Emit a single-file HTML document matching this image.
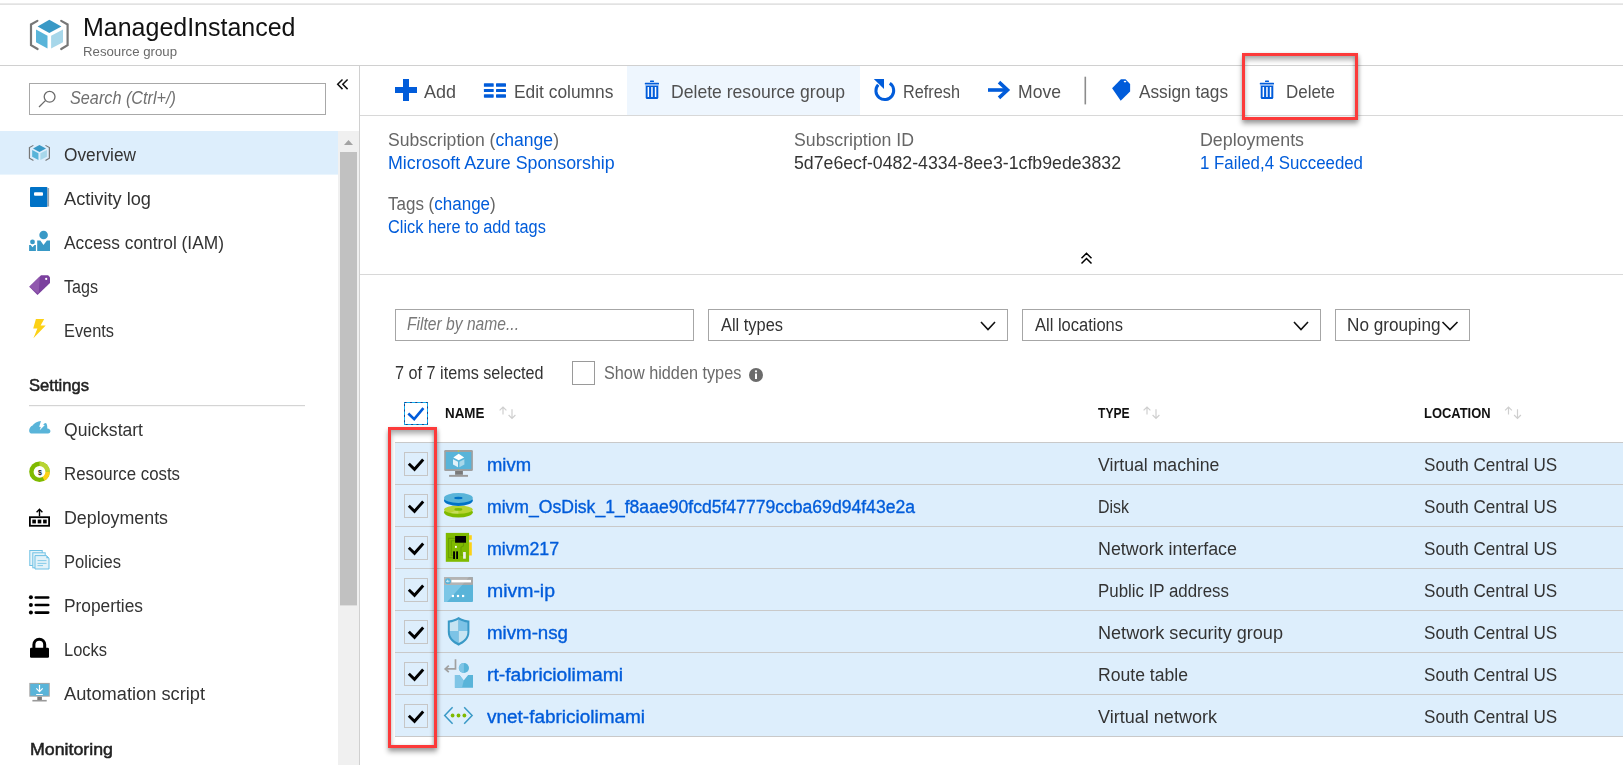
<!DOCTYPE html>
<html><head><meta charset="utf-8"><style>
html,body{margin:0;padding:0;width:1623px;height:765px;overflow:hidden;background:#fff;}
body{position:relative;font-family:"Liberation Sans",sans-serif;}
.t{position:absolute;white-space:pre;line-height:1;transform-origin:0 0;}
.rb{position:absolute;border:3px solid #fc3a3a;box-sizing:border-box;box-shadow:0 4px 5px rgba(0,0,0,.33), 1px 1px 4px rgba(0,0,0,.15), inset 0 4px 5px rgba(0,0,0,.3), inset -1px 0 3px rgba(0,0,0,.12);}
svg.bg{position:absolute;left:0;top:0;}
.tl{position:absolute;left:0;top:0;width:1623px;height:765px;will-change:transform;}
</style></head><body>
<svg class="bg" width="1623" height="765" viewBox="0 0 1623 765">
<defs>
 <g id="rg">
  <path d="M37.4,20.9 L31,24.5 L31,45.1 L37.6,49" fill="none" stroke="#777" stroke-width="2.2" stroke-linecap="round"/>
  <path d="M61.2,20.9 L67.6,24.5 L67.6,45.1 L61.2,49" fill="none" stroke="#777" stroke-width="2.2" stroke-linecap="round"/>
  <path d="M49.3,19.7 L61.4,26.5 L49.3,33 L37.6,26.5 Z" fill="#3999c6"/>
  <path d="M36,29.4 L47.5,35.8 L47.5,48.6 L36,42.2 Z" fill="#59b4d9"/>
  <path d="M51.1,35.8 L63,29.4 L63,42.2 L51.1,48.6 Z" fill="#a7d7ea"/>
 </g>
</defs>
<!-- lines -->
<rect x="0" y="3.5" width="1623" height="1.2" fill="#d6d6d6"/>
<rect x="0" y="65" width="1623" height="1" fill="#d0d0d0"/>
<rect x="359" y="65" width="1" height="700" fill="#d0d0d0"/>
<rect x="360" y="115" width="1263" height="1" fill="#d8d8d8"/>
<rect x="360" y="274" width="1263" height="1" fill="#d8d8d8"/>
<!-- header icon -->
<use href="#rg"/>
<!-- sidebar -->
<rect x="29.5" y="83.5" width="296" height="31" fill="#fff" stroke="#a8a8a8" stroke-width="1"/>
<circle cx="49.6" cy="96.8" r="5.4" fill="none" stroke="#6b6b6b" stroke-width="1.3"/>
<path d="M45.4,100.6 L39,107" stroke="#6b6b6b" stroke-width="1.3"/>
<path d="M342.5,79.5 L337.7,84.3 L342.5,89.1 M347.6,79.5 L342.8,84.3 L347.6,89.1" fill="none" stroke="#111" stroke-width="1.5"/>
<rect x="0" y="131" width="338" height="43.6" fill="#ddeefc"/>
<rect x="338" y="131" width="21" height="634" fill="#f0f0f0"/>
<path d="M344,145 L348.5,140 L353,145 Z" fill="#a3a3a3"/>
<rect x="340" y="152" width="17" height="453.4" fill="#c1c1c1"/>
<!-- overview icon -->
<g transform="translate(28.9,145) scale(0.545,0.52) translate(-30,-19.7)"><use href="#rg"/></g>
<!-- activity log -->
<rect x="30" y="187" width="17.5" height="20" rx="1" fill="#0072c6"/>
<rect x="47.5" y="188" width="1.6" height="18.5" fill="#9ea4aa"/>
<rect x="34" y="192.2" width="9" height="3.6" rx="1" fill="#fff"/>
<!-- IAM -->
<circle cx="43.6" cy="235" r="4.3" fill="#3999c6"/>
<path d="M37.2,240.6 L40.3,240.6 L43.5,245 L46.9,240.6 L50,240.6 L50,250.9 L37.2,250.9 Z" fill="#3999c6"/>
<circle cx="32.5" cy="241.9" r="2.4" fill="#3999c6"/>
<path d="M29.1,245 L30.7,245 L32.5,247.2 L34.5,245 L35.9,245 L35.9,250.9 L29.1,250.9 Z" fill="#3999c6"/>
<!-- tags purple -->
<path d="M29.3,286.7 L41,275.2 L48.1,275.2 L50,277.3 L50,283 L37.5,295 Z" fill="#7b409e"/>
<path d="M29.3,286.7 L39.8,276.4 L38.6,293.9 Z" fill="#9159ae"/>
<circle cx="46.2" cy="278.9" r="1.1" fill="#fff"/>
<!-- events -->
<path d="M35.9,318.9 L44.2,318.9 L40.6,325.6 L45.7,325.6 L33.4,338.2 L37.4,328.6 L33.2,328.6 Z" fill="#fcd116"/>
<rect x="29" y="405" width="276" height="1.2" fill="#d4d4d4"/>
<!-- quickstart cloud -->
<path d="M31,433.4 C28.4,433 28.3,427.2 32.6,425.5 C34,423.6 37.5,421.1 41,421 L39.2,426.7 L40.8,426.9 L39.7,430.3 L44.9,425.1 L43.3,425 C43.9,423.8 44.8,423.1 45.6,423.1 C47,423.4 47.4,426 47.3,428.6 C49.3,428.6 50.6,430 50.4,431.6 C50.2,432.9 49.3,433.4 48.2,433.4 Z" fill="#59b4d9"/>
<!-- resource costs -->
<circle cx="39.5" cy="471.8" r="10.3" fill="#7fba00"/>
<path d="M39.5,471.8 L39.5,461.5 A10.3,10.3 0 0 1 49.8,471.8 Z" fill="#b8d432"/>
<path d="M39.5,471.8 L49.8,471.8 A10.3,10.3 0 0 1 44.6,480.7 Z" fill="#fcd116"/>
<circle cx="39.5" cy="471.8" r="5.9" fill="#fff"/>
<text x="37.9" y="474.6" font-size="7" font-family="Liberation Sans" font-weight="bold" fill="#222">$</text>
<!-- deployments -->
<rect x="29.9" y="517.2" width="19.2" height="8.6" fill="none" stroke="#000" stroke-width="1.8"/>
<rect x="32.3" y="519.6" width="3.6" height="3.8" fill="#000"/><rect x="37.7" y="519.6" width="3.6" height="3.8" fill="#000"/><rect x="43.1" y="519.6" width="3.6" height="3.8" fill="#000"/>
<path d="M39.5,516.3 L39.5,509.5 M36.6,512.3 L39.5,509.3 L42.4,512.3" fill="none" stroke="#000" stroke-width="1.4"/>
<!-- policies -->
<rect x="29.8" y="550.5" width="12.4" height="15" fill="#e6f4fa" stroke="#6fc1e5" stroke-width="1"/>
<rect x="32.8" y="552.8" width="12.4" height="15" fill="#e6f4fa" stroke="#6fc1e5" stroke-width="1"/>
<path d="M35,555.6 H46.4 L49,558.2 V569 H35 Z" fill="#e2f2f9" stroke="#6fc1e5" stroke-width="1"/>
<path d="M46.4,555.6 L49,558.2 H46.4 Z" fill="#6fc1e5"/>
<path d="M37.5,560.6 H46.5 M37.5,563.4 H46.5 M37.5,565.6 H43" stroke="#7cc6e6" stroke-width="0.9"/>
<!-- properties -->
<circle cx="30.9" cy="597.3" r="2" fill="#000"/><circle cx="30.9" cy="604.9" r="2" fill="#000"/><circle cx="30.9" cy="612.5" r="2" fill="#000"/>
<path d="M35.8,597.5 H48.2 M35.8,605 H48.2 M35.8,612.6 H48.2" stroke="#000" stroke-width="2.7" stroke-linecap="round"/>
<!-- locks -->
<path d="M33.9,649 V644.6 A5.4,5.4 0 0 1 44.7,644.6 V649" fill="none" stroke="#000" stroke-width="3"/>
<rect x="30" y="647.8" width="19" height="9.9" rx="1.2" fill="#000"/>
<!-- automation -->
<rect x="29.3" y="682.9" width="20.5" height="13.8" fill="#a6a6a6"/>
<rect x="30.3" y="683.9" width="18.5" height="11.8" fill="#59b4d9"/>
<circle cx="39.5" cy="683.5" r="0.5" fill="#b8d432"/>
<path d="M39.5,685 V691.6 M36.3,688.4 L39.5,691.6 L42.7,688.4 M36.2,694.5 H42.8" fill="none" stroke="#fff" stroke-width="1.2"/>
<rect x="37.3" y="696.7" width="4.6" height="3.3" fill="#7a7a7a"/>
<rect x="32.4" y="699.9" width="14.3" height="1.6" fill="#999"/>
<!-- toolbar -->
<rect x="627" y="66" width="233" height="49" fill="#eef6fe"/>
<path d="M395,90 H417 M406,79 V101" stroke="#015cda" stroke-width="6"/>
<g fill="#015cda">
<rect x="483.9" y="83.2" width="9.8" height="3.6" rx="0.6"/><rect x="496" y="83.2" width="10" height="3.6" rx="0.6"/>
<rect x="483.9" y="88.9" width="9.8" height="3.1" rx="0.6"/><rect x="496" y="88.9" width="10" height="3.1" rx="0.6"/>
<rect x="483.9" y="94.2" width="9.8" height="3.5" rx="0.6"/><rect x="496" y="94.2" width="10" height="3.5" rx="0.6"/>
</g>
<g id="trash" fill="#015cda">
<rect x="650" y="80.4" width="4" height="1.6" rx="0.5"/>
<rect x="644.8" y="82.8" width="14.2" height="1.6" rx="0.5"/>
<rect x="645.2" y="84.4" width="13.4" height="1.3" fill="#8db6ef"/>
<path d="M645.7,85.7 H658.3 V97.5 Q658.3,99 656.8,99 H647.2 Q645.7,99 645.7,97.5 Z"/>
<rect x="647.6" y="87" width="1.5" height="10" fill="#fff"/><rect x="651.2" y="87" width="1.5" height="10" fill="#fff"/><rect x="654.8" y="87" width="1.5" height="10" fill="#fff"/>
</g>
<use href="#trash" transform="translate(615,0)"/>
<path d="M889.8,83.3 A8.9,8.9 0 1 1 878.2,84.7" fill="none" stroke="#015cda" stroke-width="3"/>
<path d="M873.8,79 L884,79 L884,89 Z" fill="#015cda"/>
<path d="M988,90 H1005" stroke="#015cda" stroke-width="3.6"/>
<path d="M999,82.2 L1007.5,90 L999,97.8" fill="none" stroke="#015cda" stroke-width="3.6"/>
<rect x="1084.5" y="76.7" width="1.6" height="27.7" fill="#8c8c8c"/>
<path d="M1112.1,88.2 L1120.9,79.2 L1125.5,79.2 L1130.1,84 L1130.1,91.6 L1120.7,100.8 Z" fill="#015cda"/>
<ellipse cx="1125" cy="81.6" rx="1.3" ry="0.8" fill="#fff"/>

<!-- collapse chevrons -->
<path d="M1081.5,258.3 L1086.5,253.3 L1091.5,258.3 M1081.5,263.5 L1086.5,258.5 L1091.5,263.5" fill="none" stroke="#000" stroke-width="1.5"/>

<!-- filters -->
<rect x="395.5" y="309.5" width="298" height="31" fill="#fff" stroke="#a6a6a6"/>
<rect x="708.5" y="309.5" width="299" height="31" fill="#fff" stroke="#a6a6a6"/>
<rect x="1022.5" y="309.5" width="298" height="31" fill="#fff" stroke="#a6a6a6"/>
<rect x="1335.5" y="309.5" width="134" height="31" fill="#fff" stroke="#a6a6a6"/>
<path d="M981,322 L988,329.5 L995,322" fill="none" stroke="#111" stroke-width="1.6"/>
<path d="M1294,322 L1301,329.5 L1308,322" fill="none" stroke="#111" stroke-width="1.6"/>
<path d="M1442.5,322 L1450,329.5 L1457.5,322" fill="none" stroke="#111" stroke-width="1.6"/>
<rect x="572.5" y="361.5" width="22" height="23" fill="#fff" stroke="#9a9a9a"/>
<circle cx="756" cy="375" r="7" fill="#6b6b6b"/>
<rect x="755" y="373.5" width="2" height="5.5" fill="#fff"/><circle cx="756" cy="371.3" r="1.1" fill="#fff"/>
<!-- header checkbox -->
<rect x="404.5" y="402.5" width="23" height="22" fill="#fff" stroke="#12b0f0"/><rect x="404.5" y="402.5" width="23" height="22" fill="none" stroke="#1d3f8a" stroke-dasharray="2,3.4"/>
<path d="M408.3,413.5 L414.2,419.2 L423.4,408.2" fill="none" stroke="#015cda" stroke-width="2.6"/>
<!-- sort arrows -->
<g id="sort" fill="none" stroke="#cfcfcf" stroke-width="1.2">
<path d="M503,414.4 V407 M499.6,410.4 L503,407 L506.4,410.4 M512,409.2 V418.3 M508.6,415 L512,418.4 L515.4,415"/>
</g>
<use href="#sort" transform="translate(644,0)"/>
<use href="#sort" transform="translate(1005.5,0)"/>

<!-- table -->
<rect x="395" y="442" width="1228" height="294" fill="#ddeefc"/>
<g fill="#c9c9c9">
<rect x="395" y="442" width="1228" height="1"/><rect x="395" y="484" width="1228" height="1"/><rect x="395" y="526" width="1228" height="1"/>
<rect x="395" y="568" width="1228" height="1"/><rect x="395" y="610" width="1228" height="1"/><rect x="395" y="652" width="1228" height="1"/>
<rect x="395" y="694" width="1228" height="1"/><rect x="395" y="736" width="1228" height="1"/>
</g>
<g id="cb">
<rect x="404.5" y="452.5" width="23" height="23" fill="none" stroke="#c6c6c6"/>
<path d="M408.8,463.8 L414.5,469.3 L423.2,459.5" fill="none" stroke="#000" stroke-width="2.9"/>
</g>
<use href="#cb" transform="translate(0,42)"/><use href="#cb" transform="translate(0,84)"/><use href="#cb" transform="translate(0,126)"/>
<use href="#cb" transform="translate(0,168)"/><use href="#cb" transform="translate(0,210)"/><use href="#cb" transform="translate(0,252)"/>
<!-- VM icon -->
<rect x="444.2" y="450" width="28.7" height="21" rx="1.2" fill="#a0a0a0"/>
<rect x="445.8" y="452" width="25.5" height="17.1" fill="#59b4d9"/>
<circle cx="458.5" cy="451" r="0.7" fill="#b8d432"/>
<path d="M458.7,453.8 L464.2,457.5 L458.7,460.2 L453.3,457.5 Z" fill="#fff"/>
<path d="M453,459.3 L458,461.8 L458,467.2 L453,464.6 Z" fill="#e1f1f9"/>
<path d="M459.4,461.8 L464.4,459.3 L464.4,464.6 L459.4,467.2 Z" fill="#a8d8ea"/>
<rect x="455.1" y="471" width="7.8" height="3.8" fill="#7a7a7a"/>
<rect x="449.1" y="474.9" width="18.9" height="1.9" fill="#999"/>
<!-- disk icon -->
<ellipse cx="458.4" cy="512.3" rx="14.4" ry="5.3" fill="#7fba00"/>
<ellipse cx="458.4" cy="509.6" rx="14.4" ry="4.2" fill="#b8d432"/>
<path d="M458.4,509.6 L450,513 A14.4,4.2 0 0 0 458.4,513.8 Z" fill="#d0e57a" opacity="0.6"/>
<ellipse cx="458.4" cy="509.4" rx="4" ry="1.3" fill="#7fba00"/>
<ellipse cx="458.4" cy="500.6" rx="14.4" ry="5.3" fill="#0072c6"/>
<ellipse cx="458.4" cy="498" rx="14.4" ry="4.9" fill="#59b4d9"/>
<ellipse cx="458.4" cy="498" rx="4.2" ry="1.2" fill="#0072c6"/>
<!-- NIC icon -->
<rect x="469.1" y="535.2" width="2.7" height="4.6" fill="#fcd116"/>
<rect x="469.1" y="542.3" width="2.7" height="13.2" fill="#fcd116"/>
<rect x="445.8" y="532.9" width="23.3" height="28.9" fill="#7fba00"/>
<path d="M454.8,538.4 H448.6 V557.6 H452.6" fill="none" stroke="#6aa000" stroke-width="1.1"/>
<path d="M454.8,540.8 H451.3 V555.4 H452.6" fill="none" stroke="#6aa000" stroke-width="1.1"/>
<path d="M463.5,542.7 V545.8 L461,547.2 V555.3 H463" fill="none" stroke="#6aa000" stroke-width="1.1"/>
<rect x="455.1" y="536" width="10.9" height="6.7" fill="#000"/>
<circle cx="455.9" cy="546.9" r="1.05" fill="#fff"/>
<rect x="453.1" y="551.3" width="1.9" height="7.8" rx="0.5" fill="#000"/><rect x="456.2" y="551.3" width="1.8" height="7.8" rx="0.5" fill="#000"/>
<rect x="463.1" y="552" width="2.7" height="6.7" fill="#eee"/>
<!-- public IP -->
<rect x="444" y="577.1" width="29" height="24.9" rx="1" fill="#59b4d9"/>
<path d="M444,584.9 L462.2,584.9 L447,602 L444,602 Z" fill="#7cc6e6"/>
<rect x="444" y="577.1" width="29" height="7.8" rx="1" fill="#a8a8a8"/>
<path d="M444,584.9 L462.2,584.9 L469,577.1 L444,577.1 Z" fill="#b4b4b4"/>
<rect x="451.5" y="579.9" width="19.5" height="2.5" fill="#fff"/>
<circle cx="448" cy="581.2" r="2.9" fill="#59b4d9"/>
<path d="M449.5,581.2 H446.8 M447.8,580 L446.6,581.2 L447.8,582.4" fill="none" stroke="#fff" stroke-width="0.8"/>
<rect x="451.8" y="594.9" width="2.2" height="2.2" fill="#fff"/><rect x="456.9" y="594.9" width="2.2" height="2.2" fill="#fff"/><rect x="462" y="594.9" width="2.2" height="2.2" fill="#fff"/>
<!-- NSG shield -->
<path d="M458.6,617 C454,620 450.5,620.3 447.8,620.5 L447.8,632 C447.8,639 453,643 458.6,645.7 C464.2,643 469.4,639 469.4,632 L469.4,620.5 C466.7,620.3 463.2,620 458.6,617 Z" fill="#3999c6"/>
<path d="M458.6,619.5 C455,621.5 452.5,622.2 449.8,622.4 L449.8,631 L458.6,631 Z" fill="#c6e4f2"/>
<path d="M458.6,619.5 C462.2,621.5 464.7,622.2 467.4,622.4 L467.4,631 L458.6,631 Z" fill="#7cc3e6"/>
<path d="M449.8,631 L458.6,631 L458.6,643 C453,640.5 449.8,637 449.8,632 Z" fill="#7cc3e6"/>
<path d="M467.4,631 L458.6,631 L458.6,643 C464.2,640.5 467.4,637 467.4,632 Z" fill="#c6e4f2"/>
<!-- route table -->
<path d="M455.5,659.2 V668.9 H445.3 M448.8,665.6 L445.2,668.9 L448.8,672.2" fill="none" stroke="#a0a0a0" stroke-width="1.7"/>
<circle cx="463.9" cy="668" r="5.1" fill="#59b4d9"/>
<path d="M463.9,662.9 A5.1,5.1 0 0 0 463.9,673.1 Z" fill="#7fc5e6"/>
<path d="M454.9,675 L459.5,675 L463.7,680.5 L468.1,675 L473,675 L473,687.8 L454.9,687.8 Z" fill="#59b4d9"/>
<path d="M454.9,675 L459.5,675 L463.7,680.5 L462,687.8 L454.9,687.8 Z" fill="#7fc5e6"/>
<!-- vnet -->
<path d="M452.6,707.3 L444.7,715.5 L452.6,723.7 M464.2,707.3 L472.1,715.5 L464.2,723.7" fill="none" stroke="#3999c6" stroke-width="1.5"/>
<circle cx="452.6" cy="715.5" r="1.9" fill="#7fba00"/><circle cx="458.5" cy="715.5" r="1.9" fill="#7fba00"/><circle cx="464.4" cy="715.5" r="1.9" fill="#7fba00"/>
</svg>

<div class="tl">
<span class="t" style="left:82.5px;top:15.00px;font-size:25px;color:#111;transform:scaleX(0.9992);">ManagedInstanced</span>
<span class="t" style="left:83.0px;top:45.00px;font-size:13px;color:#6a6a6a;transform:scaleX(1.0162);">Resource group</span>
<span class="t" style="left:70.0px;top:90.00px;font-size:17.6px;color:#707070;font-style:italic;transform:scaleX(0.9227);">Search (Ctrl+/)</span>
<span class="t" style="left:64.0px;top:147.00px;font-size:17.6px;color:#333333;transform:scaleX(0.9819);">Overview</span>
<span class="t" style="left:64.0px;top:191.00px;font-size:17.6px;color:#333333;transform:scaleX(1.0346);">Activity log</span>
<span class="t" style="left:64.0px;top:235.00px;font-size:17.6px;color:#333333;transform:scaleX(0.9858);">Access control (IAM)</span>
<span class="t" style="left:64.0px;top:279.00px;font-size:17.6px;color:#333333;transform:scaleX(0.9147);">Tags</span>
<span class="t" style="left:64.0px;top:323.00px;font-size:17.6px;color:#333333;transform:scaleX(0.9294);">Events</span>
<span class="t" style="left:64.0px;top:422.00px;font-size:17.6px;color:#333333;transform:scaleX(0.9974);">Quickstart</span>
<span class="t" style="left:64.0px;top:466.00px;font-size:17.6px;color:#333333;transform:scaleX(0.9567);">Resource costs</span>
<span class="t" style="left:64.0px;top:510.00px;font-size:17.6px;color:#333333;transform:scaleX(1.0128);">Deployments</span>
<span class="t" style="left:64.0px;top:554.00px;font-size:17.6px;color:#333333;transform:scaleX(0.9402);">Policies</span>
<span class="t" style="left:64.0px;top:598.00px;font-size:17.6px;color:#333333;transform:scaleX(0.9852);">Properties</span>
<span class="t" style="left:64.0px;top:642.00px;font-size:17.6px;color:#333333;transform:scaleX(0.9354);">Locks</span>
<span class="t" style="left:64.0px;top:686.00px;font-size:17.6px;color:#333333;transform:scaleX(1.0372);">Automation script</span>
<span class="t" style="left:29.4px;top:377.00px;font-size:17px;color:#222;-webkit-text-stroke:0.5px #222;transform:scaleX(0.9766);">Settings</span>
<span class="t" style="left:30.3px;top:741.00px;font-size:17px;color:#222;-webkit-text-stroke:0.5px #222;transform:scaleX(1.0457);">Monitoring</span>
<span class="t" style="left:424.3px;top:82.00px;font-size:19px;color:#505050;transform:scaleX(0.9464);">Add</span>
<span class="t" style="left:513.6px;top:82.00px;font-size:19px;color:#505050;transform:scaleX(0.9138);">Edit columns</span>
<span class="t" style="left:671.0px;top:82.00px;font-size:19px;color:#505050;transform:scaleX(0.9255);">Delete resource group</span>
<span class="t" style="left:903.0px;top:82.00px;font-size:19px;color:#505050;transform:scaleX(0.8567);">Refresh</span>
<span class="t" style="left:1018.0px;top:82.00px;font-size:19px;color:#505050;transform:scaleX(0.9254);">Move</span>
<span class="t" style="left:1139.0px;top:82.00px;font-size:19px;color:#505050;transform:scaleX(0.9060);">Assign tags</span>
<span class="t" style="left:1286.0px;top:82.00px;font-size:19px;color:#505050;transform:scaleX(0.8922);">Delete</span>
<span class="t" style="left:388.0px;top:132.00px;font-size:17.6px;color:#666666;transform:scaleX(0.9990);">Subscription (<span style="color:#015cda">change</span>)</span>
<span class="t" style="left:388.0px;top:155.00px;font-size:17.6px;color:#015cda;transform:scaleX(1.0123);">Microsoft Azure Sponsorship</span>
<span class="t" style="left:793.5px;top:132.00px;font-size:17.6px;color:#666666;transform:scaleX(1.0058);">Subscription ID</span>
<span class="t" style="left:793.5px;top:155.00px;font-size:17.6px;color:#333333;transform:scaleX(1.0068);">5d7e6ecf-0482-4334-8ee3-1cfb9ede3832</span>
<span class="t" style="left:1199.5px;top:132.00px;font-size:17.6px;color:#666666;transform:scaleX(1.0128);">Deployments</span>
<span class="t" style="left:1199.5px;top:155.00px;font-size:17.6px;color:#015cda;transform:scaleX(0.9577);">1 Failed,4 Succeeded</span>
<span class="t" style="left:388.0px;top:196.00px;font-size:17.6px;color:#666666;transform:scaleX(0.9658);">Tags (<span style="color:#015cda">change</span>)</span>
<span class="t" style="left:388.0px;top:219.00px;font-size:17.6px;color:#015cda;transform:scaleX(0.9273);">Click here to add tags</span>
<span class="t" style="left:407.0px;top:316.00px;font-size:17.6px;color:#787878;font-style:italic;transform:scaleX(0.8879);">Filter by name...</span>
<span class="t" style="left:721.0px;top:317.00px;font-size:17.6px;color:#333333;transform:scaleX(0.9323);">All types</span>
<span class="t" style="left:1034.5px;top:317.00px;font-size:17.6px;color:#333333;transform:scaleX(0.9373);">All locations</span>
<span class="t" style="left:1347.4px;top:317.00px;font-size:17.6px;color:#333333;transform:scaleX(0.9754);">No grouping</span>
<span class="t" style="left:395.4px;top:365.00px;font-size:17.6px;color:#333333;transform:scaleX(0.9209);">7 of 7 items selected</span>
<span class="t" style="left:604.3px;top:365.00px;font-size:17.6px;color:#6a6a6a;transform:scaleX(0.9235);">Show hidden types</span>
<span class="t" style="left:445.4px;top:406.00px;font-size:14.5px;color:#111;font-weight:bold;transform:scaleX(0.9226);">NAME</span>
<span class="t" style="left:1098.0px;top:406.00px;font-size:14.5px;color:#111;font-weight:bold;transform:scaleX(0.8370);">TYPE</span>
<span class="t" style="left:1424.0px;top:406.00px;font-size:14.5px;color:#111;font-weight:bold;transform:scaleX(0.8923);">LOCATION</span>
<span class="t" style="left:486.8px;top:457.00px;font-size:17.6px;color:#015cda;-webkit-text-stroke:0.35px #015cda;transform:scaleX(1.0468);">mivm</span>
<span class="t" style="left:1098.0px;top:457.00px;font-size:17.6px;color:#333333;transform:scaleX(1.0037);">Virtual machine</span>
<span class="t" style="left:1423.7px;top:457.00px;font-size:17.6px;color:#333333;transform:scaleX(0.9728);">South Central US</span>
<span class="t" style="left:486.8px;top:499.00px;font-size:17.6px;color:#015cda;-webkit-text-stroke:0.35px #015cda;transform:scaleX(0.9990);">mivm_OsDisk_1_f8aae90fcd5f47779ccba69d94f43e2a</span>
<span class="t" style="left:1098.0px;top:499.00px;font-size:17.6px;color:#333333;transform:scaleX(0.9059);">Disk</span>
<span class="t" style="left:1423.7px;top:499.00px;font-size:17.6px;color:#333333;transform:scaleX(0.9728);">South Central US</span>
<span class="t" style="left:486.8px;top:541.00px;font-size:17.6px;color:#015cda;-webkit-text-stroke:0.35px #015cda;transform:scaleX(1.0088);">mivm217</span>
<span class="t" style="left:1098.0px;top:541.00px;font-size:17.6px;color:#333333;transform:scaleX(1.0153);">Network interface</span>
<span class="t" style="left:1423.7px;top:541.00px;font-size:17.6px;color:#333333;transform:scaleX(0.9728);">South Central US</span>
<span class="t" style="left:486.8px;top:583.00px;font-size:17.6px;color:#015cda;-webkit-text-stroke:0.35px #015cda;transform:scaleX(1.1043);">mivm-ip</span>
<span class="t" style="left:1098.0px;top:583.00px;font-size:17.6px;color:#333333;transform:scaleX(0.9590);">Public IP address</span>
<span class="t" style="left:1423.7px;top:583.00px;font-size:17.6px;color:#333333;transform:scaleX(0.9728);">South Central US</span>
<span class="t" style="left:486.8px;top:625.00px;font-size:17.6px;color:#015cda;-webkit-text-stroke:0.35px #015cda;transform:scaleX(1.0623);">mivm-nsg</span>
<span class="t" style="left:1098.0px;top:625.00px;font-size:17.6px;color:#333333;transform:scaleX(1.0282);">Network security group</span>
<span class="t" style="left:1423.7px;top:625.00px;font-size:17.6px;color:#333333;transform:scaleX(0.9728);">South Central US</span>
<span class="t" style="left:486.8px;top:667.00px;font-size:17.6px;color:#015cda;-webkit-text-stroke:0.35px #015cda;transform:scaleX(1.0954);">rt-fabriciolimami</span>
<span class="t" style="left:1098.0px;top:667.00px;font-size:17.6px;color:#333333;transform:scaleX(1.0000);">Route table</span>
<span class="t" style="left:1423.7px;top:667.00px;font-size:17.6px;color:#333333;transform:scaleX(0.9728);">South Central US</span>
<span class="t" style="left:486.8px;top:709.00px;font-size:17.6px;color:#015cda;-webkit-text-stroke:0.35px #015cda;transform:scaleX(1.0773);">vnet-fabriciolimami</span>
<span class="t" style="left:1098.0px;top:709.00px;font-size:17.6px;color:#333333;transform:scaleX(1.0254);">Virtual network</span>
<span class="t" style="left:1423.7px;top:709.00px;font-size:17.6px;color:#333333;transform:scaleX(0.9728);">South Central US</span>
</div>
<div class="rb" style="left:1242px;top:53px;width:116px;height:67px;"></div>
<div class="rb" style="left:388px;top:427px;width:49px;height:321px;"></div>
</body></html>
